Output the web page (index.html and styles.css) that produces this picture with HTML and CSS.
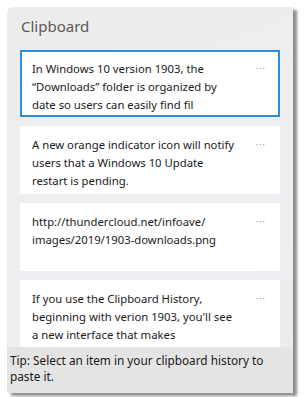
FILE: index.html
```html
<!DOCTYPE html>
<html lang="en">
  <head>
    <meta charset="utf-8" />
    <title>Clipboard</title>
    <link rel="stylesheet" href="styles.css">
  </head>
  <body>
    <div class="panel">
      <h1 class="title">Clipboard</h1>
      <div class="list">
        <div class="item selected">
          <p>In Windows 10 version 1903, the<br>“Downloads” folder is organized by<br>date so users can easily find fil</p>
          <span class="more">···</span>
        </div>
        <div class="item">
          <p>A new orange indicator icon will notify<br>users that a Windows 10 Update<br>restart is pending.</p>
          <span class="more">···</span>
        </div>
        <div class="item">
          <p>http://thundercloud.net/infoave/<br>images/2019/1903-downloads.png</p>
          <span class="more">···</span>
        </div>
        <div class="item">
          <p>If you use the Clipboard History,<br>beginning with verion 1903, you'll see<br>a new interface that makes</p>
          <span class="more">···</span>
        </div>
      </div>
      <div class="tip">Tip: Select an item in your clipboard history to paste it.</div>
    </div>
  </body>
</html>
```

FILE: styles.css
```css
* {
  margin: 0;
  padding: 0;
  box-sizing: border-box;
}
html,
body {
  width: 100%;
  height: 100%;
  background: #fff;
  overflow: hidden;
}
body {
  padding: 7px 8px 0 7px;
  font-family: "Segoe UI", "Noto Sans", "Open Sans", sans-serif;
  color: #1a1a1a;
}
.panel {
  width: 286px;
  height: 386px;
  border-radius: 6px 0 0 0;
  background: linear-gradient(160deg, #ececec 0%, #eeeff1 50%, #e9ecf0 100%);
  box-shadow: 4px 3px 3px rgba(0, 0, 0, 0.45);
  display: flex;
  flex-direction: column;
  overflow: hidden;
}
.title {
  font-size: 15px;
  font-weight: 400;
  color: #5a5a5a;
  padding: 9px 0 0 14px;
  height: 43px;
}
.list {
  flex: 1;
  display: flex;
  flex-direction: column;
  gap: 9px;
  padding: 0 13px;
  overflow: hidden;
}
.item {
  flex: none;
  height: 68px;
  background: #fff;
  display: flex;
  justify-content: space-between;
  padding: 8px 12px 0 10px;
  border: 2px solid transparent;
}
.item.selected {
  border-color: #2b8ddb;
  height: 67px;
}
.item p {
  width: 215px;
  font-size: 11.3px;
  line-height: 18px;
  white-space: nowrap;
  color: #1a1a1a;
}
.more {
  font-size: 9px;
  line-height: 10px;
  color: #999;
  letter-spacing: 1px;
  padding-top: 4px;
}
.tip {
  flex: none;
  height: 46px;
  background: #e4e4e4;
  font-size: 11.8px;
  line-height: 16px;
  color: #1a1a1a;
  padding: 5px 10px 0 3px;
}
```
